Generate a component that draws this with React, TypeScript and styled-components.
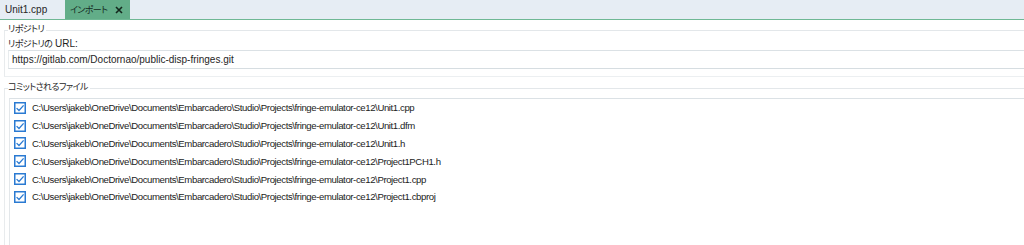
import React from "react";
import styled, { createGlobalStyle } from "styled-components";

const GlobalStyle = createGlobalStyle`
    html, body {
        margin: 0;
        padding: 0;
        background: #ffffff;
    }
    body {
        font-family: "Liberation Sans", "Noto Sans CJK JP", sans-serif;
        font-size: 10px;
        color: #1e1e1e;
        font-feature-settings: "palt";
    }
`;

const Page = styled.div`
    width: 1024px;
    height: 245px;
    display: flex;
    flex-direction: column;
    overflow: hidden;
`;

const TabBar = styled.div`
    height: 19px;
    flex: none;
    display: flex;
    background: #e6edf4;
    border-bottom: 1px solid #6fb894;
`;

const Tab = styled.div<{ active?: boolean }>`
    display: flex;
    align-items: center;
    gap: 8px;
    box-sizing: border-box;
    width: 65px;
    padding-left: 5px;
    background: ${p => (p.active ? "#62ad88" : "transparent")};
    color: ${p => (p.active ? "#142a1f" : "#262626")};
    font-size: 10px;
    white-space: nowrap;
`;

// Japanese runs: a bit smaller and tighter so they match the narrow UI font
const Jp = styled.span`
    font-family: "Noto Sans CJK JP", sans-serif;
    font-size: 9px;
    letter-spacing: -0.6px;
`;

const Body = styled.div`
    flex: 1;
    display: flex;
    flex-direction: column;
    padding: 10px 0 0 4px;
`;

const Group = styled.div<{ grow?: boolean }>`
    position: relative;
    border-top: 1px solid #e3e7ea;
    border-left: 1px solid #e8ebed;
    display: flex;
    flex-direction: column;
    flex: ${p => (p.grow ? 1 : "none")};
`;

const RepoGroup = styled(Group)`
    padding: 0 0 7px 3px;
    border-bottom: 1px solid #eceff1;
`;

const FilesGroup = styled(Group)`
    margin-top: 11px;
    padding: 9px 0 0 4px;
`;

const Legend = styled.span`
    position: absolute;
    top: -8px;
    left: 3px;
    background: #fff;
    padding-right: 2px;
    line-height: 12px;
`;

const FieldLabel = styled.div`
    font-size: 10px;
    line-height: 13px;
    margin-top: 6px;
`;

const Edit = styled.div`
    height: 17px;
    border-top: 1px solid #dbe1e5;
    border-bottom: 1px solid #d6dde1;
    border-left: 1px solid #e8ecee;
    display: flex;
    align-items: center;
    padding-left: 3px;
    font-size: 10px;
`;

const FileList = styled.div`
    flex: 1;
    border-top: 1px solid #dbe1e5;
    border-left: 1px solid #e3e7ea;
    padding: 0 0 0 4px;
    display: flex;
    flex-direction: column;
`;

const Row = styled.div`
    height: 17.8px;
    flex: none;
    display: flex;
    align-items: center;
    gap: 6px;
`;

const Path = styled.span`
    font-size: 9.6px;
    letter-spacing: -0.4px;
    white-space: nowrap;
    color: #222;
`;

const Check = () => (
    <svg width="12" height="12" viewBox="0 0 12 12">
        <rect x="0.75" y="0.75" width="10.5" height="10.5" fill="#fff" stroke="#2a7ad2" strokeWidth="1.5" />
        <path d="M2.6 6.1 L5 8.5 L9.6 3.4" fill="none" stroke="#2a7ad2" strokeWidth="1.3" />
    </svg>
);

const CloseIcon = () => (
    <svg width="8" height="8" viewBox="0 0 8 8">
        <path d="M1 1 L7 7 M7 1 L1 7" stroke="#13261c" strokeWidth="1.6" />
    </svg>
);

const base = "C:\\Users\\jakeb\\OneDrive\\Documents\\Embarcadero\\Studio\\Projects\\fringe-emulator-ce12\\";
const files = ["Unit1.cpp", "Unit1.dfm", "Unit1.h", "Project1PCH1.h", "Project1.cpp", "Project1.cbproj"];

export default function App() {
    return <Page>
        <GlobalStyle />
        <TabBar>
            <Tab>Unit1.cpp</Tab>
            <Tab active><Jp>インポート</Jp><CloseIcon /></Tab>
        </TabBar>
        <Body>
            <RepoGroup>
                <Legend><Jp>リポジトリ</Jp></Legend>
                <FieldLabel><Jp>リポジトリの</Jp> URL:</FieldLabel>
                <Edit>https://gitlab.com/Doctornao/public-disp-fringes.git</Edit>
            </RepoGroup>
            <FilesGroup grow>
                <Legend><Jp>コミットされるファイル</Jp></Legend>
                <FileList>
                    {files.map((f, i) =>
                        <Row key={i}>
                            <Check />
                            <Path>{base + f}</Path>
                        </Row>
                    )}
                </FileList>
            </FilesGroup>
        </Body>
    </Page>;
}
